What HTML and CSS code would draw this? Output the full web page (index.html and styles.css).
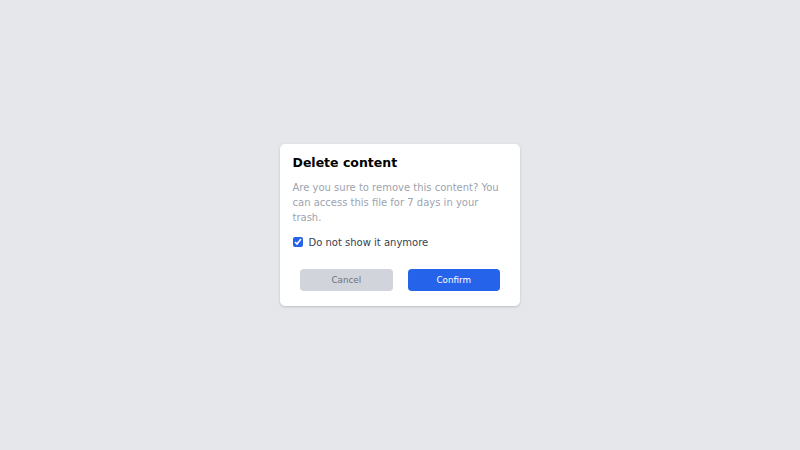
FILE: index.html
```html
<!DOCTYPE html>
<html>
<head>
<meta charset="utf-8">
<link rel="stylesheet" href="styles.css">
</head>
<body>
<div class="dialog">
  <h2 class="title">Delete content</h2>
  <p class="message">Are you sure to remove this content? You can access this file for 7 days in your trash.</p>
  <label class="check">
    <input type="checkbox" checked>
    <span>Do not show it anymore</span>
  </label>
  <div class="actions">
    <button class="btn btn-cancel">Cancel</button>
    <button class="btn btn-confirm">Confirm</button>
  </div>
</div>
</body>
</html>
```
FILE: styles.css
```css
html, body {
  margin: 0;
  height: 100%;
}
body {
  background: #e5e7eb;
  font-family: "DejaVu Sans", sans-serif;
  display: flex;
  align-items: center;
  justify-content: center;
}
.dialog {
  width: 240px;
  box-sizing: border-box;
  background: #ffffff;
  border-radius: 5px;
  padding: 11px 12.5px 15px;
  box-shadow: 0 1px 3px rgba(0,0,0,0.12), 0 1px 2px rgba(0,0,0,0.06);
}
.title {
  margin: 0;
  font-size: 12.5px;
  line-height: 15px;
  font-weight: bold;
  color: #000000;
}
.message {
  margin: 10px 0 0;
  font-size: 10px;
  line-height: 15px;
  color: #9ca3af;
}
.check {
  display: flex;
  align-items: center;
  gap: 6px;
  margin-top: 10px;
  font-size: 10px;
  line-height: 15px;
  color: #374151;
}
.check input {
  margin: 0;
  width: 10px;
  height: 10px;
  accent-color: #2563eb;
}
.actions {
  display: flex;
  justify-content: space-around;
  margin-top: 19px;
}
.btn {
  width: 92.5px;
  height: 22.5px;
  border: none;
  border-radius: 3.75px;
  font-family: "DejaVu Sans", sans-serif;
  font-size: 8.75px;
  padding: 0;
}
.btn-cancel {
  background: #d1d5db;
  color: #6b7280;
}
.btn-confirm {
  background: #2563eb;
  color: #ffffff;
}
```
